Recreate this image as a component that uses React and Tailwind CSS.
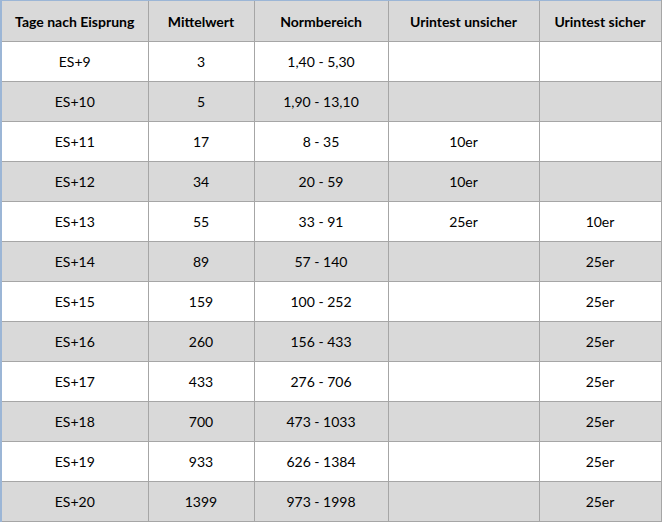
import React from "react";

const rows = [
  ["ES+9", "3", "1,40 - 5,30", "", ""],
  ["ES+10", "5", "1,90 - 13,10", "", ""],
  ["ES+11", "17", "8 - 35", "10er", ""],
  ["ES+12", "34", "20 - 59", "10er", ""],
  ["ES+13", "55", "33 - 91", "25er", "10er"],
  ["ES+14", "89", "57 - 140", "", "25er"],
  ["ES+15", "159", "100 - 252", "", "25er"],
  ["ES+16", "260", "156 - 433", "", "25er"],
  ["ES+17", "433", "276 - 706", "", "25er"],
  ["ES+18", "700", "473 - 1033", "", "25er"],
  ["ES+19", "933", "626 - 1384", "", "25er"],
  ["ES+20", "1399", "973 - 1998", "", "25er"],
];

const headers = ["Tage nach Eisprung", "Mittelwert", "Normbereich", "Urintest unsicher", "Urintest sicher"];
const widths = ["w-[147px]", "w-[106px]", "w-[134px]", "w-[151px]", "w-[122px]"];

export default function App() {
  return (
    <div className="w-[663px] h-[522px] bg-white overflow-hidden" style={{ fontFamily: "Lato, 'Noto Sans', sans-serif" }}>
      <table className="border-collapse table-fixed text-black text-[14px]">
        <colgroup>
          {widths.map((w, i) => (
            <col key={i} className={w} />
          ))}
        </colgroup>
        <thead>
          <tr className="h-[41px] bg-[#d9d9d9]">
            {headers.map((h, i) => (
              <th
                key={i}
                className={`font-bold border-b border-b-[#a6a6a6] border-t border-t-[#9cb6d6] ${i === 0 ? "border-l-2 border-l-[#9cb6d6]" : "border-l border-l-[#a6a6a6]"} ${i === 4 ? "border-r border-r-[#a6a6a6]" : ""} px-0 text-center`}
              >
                {h}
              </th>
            ))}
          </tr>
        </thead>
        <tbody>
          {rows.map((r, ri) => (
            <tr key={ri} className={`h-[40px] ${ri % 2 === 1 ? "bg-[#d9d9d9]" : "bg-white"}`}>
              {r.map((c, ci) => (
                <td
                  key={ci}
                  className={`border-b border-b-[#a6a6a6] ${ci === 0 ? "border-l-2 border-l-[#9cb6d6]" : "border-l border-l-[#a6a6a6]"} ${ci === 4 ? "border-r border-r-[#a6a6a6]" : ""} text-center p-0`}
                >
                  {c}
                </td>
              ))}
            </tr>
          ))}
        </tbody>
      </table>
    </div>
  );
}
